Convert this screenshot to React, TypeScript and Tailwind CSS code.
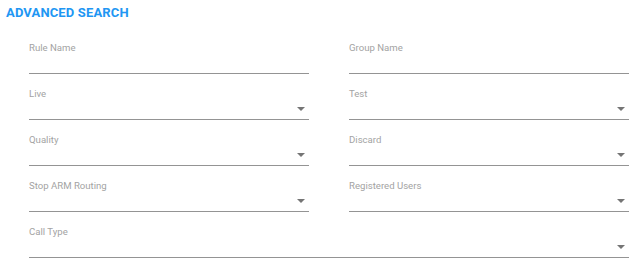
import React from "react";

type Field = {
  label: string;
  select?: boolean;
  full?: boolean;
};

const fields: Field[] = [
  { label: "Rule Name" },
  { label: "Group Name" },
  { label: "Live", select: true },
  { label: "Test", select: true },
  { label: "Quality", select: true },
  { label: "Discard", select: true },
  { label: "Stop ARM Routing", select: true },
  { label: "Registered Users", select: true },
  { label: "Call Type", select: true, full: true },
];

const FormField = ({ field }: { field: Field }) => (
  <div
    className={`h-[46px] flex flex-col justify-end ${
      field.full ? "col-span-2" : ""
    }`}
  >
    <label className="text-[9.6px] leading-[12px] text-[#a3a3a3]">
      {field.label}
    </label>
    <div className="h-[20px] border-b border-[#949494] flex items-center justify-end pr-[4px] pb-[2px]">
      {field.select && (
        <span className="w-0 h-0 border-x-[4px] border-t-[4px] border-x-transparent border-t-[#757575]" />
      )}
    </div>
  </div>
);

const App = () => {
  return (
    <div className="w-[635px] h-[263px] bg-white px-[6px] pt-[5px] font-['Roboto',sans-serif]">
      <h2 className="text-[13px] leading-[16px] font-bold text-[#2196f3] tracking-[0.15px]">
        ADVANCED SEARCH
      </h2>
      <form className="grid grid-cols-2 gap-x-10 pl-[23px] mt-[7px]">
        {fields.map((field) => (
          <FormField key={field.label} field={field} />
        ))}
      </form>
    </div>
  );
};

export default App;
